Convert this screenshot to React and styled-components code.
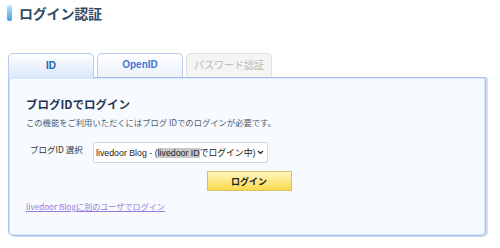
import styled, { createGlobalStyle } from "styled-components";

const GlobalStyle = createGlobalStyle`
    body {
        margin: 0;
        background: #ffffff;
        font-family: "Noto Sans CJK JP", "Noto Sans", sans-serif;
    }
`;

const tabs = [
    { label: "ID", state: "active" },
    { label: "OpenID", state: "normal" },
    { label: "パスワード認証", state: "disabled" },
];

export default function App() {
    return (
        <Page>
            <GlobalStyle />
            <Title>
                <TitleBar />
                ログイン認証
            </Title>
            <TabRow>
                {tabs.map((t) => (
                    <Tab key={t.label} $state={t.state}>{t.label}</Tab>
                ))}
            </TabRow>
            <Panel>
                <Heading>ブログIDでログイン</Heading>
                <Note>この機能をご利用いただくにはブログ IDでのログインが必要です。</Note>
                <FormRow>
                    <Label>ブログID 選択</Label>
                    <Select>
                        livedoor Blog - (<Mark>livedoor ID</Mark>でログイン中)
                        <Chevron viewBox="0 0 8 6" width="7" height="5">
                            <path d="M1 1.2 L4 4.2 L7 1.2" fill="none" stroke="#222" strokeWidth="1.4" />
                        </Chevron>
                    </Select>
                </FormRow>
                <ButtonRow>
                    <LoginButton>ログイン</LoginButton>
                </ButtonRow>
                <OtherLink href="#">livedoor Blogに別のユーザでログイン</OtherLink>
            </Panel>
        </Page>
    );
}

const Page = styled.div`
    width: 500px;
    height: 248px;
    padding: 5px 14px 0 8px;
    box-sizing: border-box;
`;

const Title = styled.h1`
    display: flex;
    align-items: center;
    gap: 7px;
    margin: 0 0 0 -1px;
    height: 16px;
    font-size: 14px;
    font-weight: bold;
    color: #2f4b63;
    letter-spacing: -0.2px;
`;

const TitleBar = styled.span`
    display: block;
    width: 5px;
    height: 16px;
    border-radius: 2px;
    background: linear-gradient(to bottom, #bfe6ff, #3f9fe0);
`;

const TabRow = styled.div`
    display: flex;
    gap: 3px;
    margin-top: 32px;
    position: relative;
    z-index: 1;
`;

const Tab = styled.div`
    width: 86px;
    height: ${(p) => (p.$state === "active" ? "26px" : "24px")};
    margin-bottom: ${(p) => (p.$state === "active" ? "-2px" : "0")};
    box-sizing: border-box;
    display: flex;
    align-items: center;
    justify-content: center;
    padding-bottom: 2px;
    border: 1px solid ${(p) => (p.$state === "disabled" ? "#e0e0e0" : "#b7c9ec")};
    border-bottom: none;
    border-radius: 5px 5px 0 0;
    font-family: "Liberation Sans", "Noto Sans CJK JP", sans-serif;
    font-size: 10px;
    font-weight: ${(p) => (p.$state === "disabled" ? "normal" : "bold")};
    color: ${(p) =>
        p.$state === "active" ? "#2f5aa6" : p.$state === "disabled" ? "#b8b8b8" : "#4576d2"};
    background: ${(p) =>
        p.$state === "active"
            ? "linear-gradient(to bottom, #ffffff, #d7e5fa)"
            : p.$state === "disabled"
            ? "#f4f4f4"
            : "linear-gradient(to bottom, #ffffff, #edf3fd)"};
`;

const Panel = styled.div`
    width: 478px;
    height: 159px;
    box-sizing: border-box;
    padding: 18px 17px 0 17px;
    background: #f7faff;
    border: 1px solid #a9bfea;
    border-radius: 0 0 5px 5px;
    box-shadow: inset 0 0 0 1px #dce6f8, 2px 1px 0 #d3def5;
`;

const Heading = styled.h2`
    margin: 0;
    font-size: 11.5px;
    font-weight: bold;
    color: #1f3550;
    line-height: 16px;
`;

const Note = styled.p`
    margin: 4px 0 0;
    font-size: 8.3px;
    color: #4e5c6c;
    line-height: 12px;
`;

const FormRow = styled.div`
    display: flex;
    align-items: flex-start;
    margin-top: 14px;
    padding-left: 4px;
`;

const Label = styled.span`
    width: 63px;
    padding-top: 1px;
    font-size: 8.5px;
    color: #333;
    line-height: 12px;
`;

const Select = styled.div`
    display: flex;
    align-items: center;
    height: 21px;
    box-sizing: border-box;
    padding: 0 3px 0 2px;
    background: #ffffff;
    border: 1px solid #d6d6d6;
    border-radius: 2px;
    font-family: "Liberation Sans", "Noto Sans CJK JP", sans-serif;
    font-size: 8.8px;
    color: #222;
    white-space: nowrap;
`;

const Mark = styled.span`
    background: #c8c8c8;
`;

const Chevron = styled.svg`
    margin-left: 2px;
`;

const ButtonRow = styled.div`
    display: flex;
    justify-content: center;
    margin-top: 8px;
    padding-left: 4px;
`;

const LoginButton = styled.button`
    width: 85px;
    height: 20px;
    padding: 0;
    border: 1px solid #d8bf6a;
    background: linear-gradient(to bottom, #fff6c2, #fbd94a);
    font-family: "Noto Sans CJK JP", sans-serif;
    font-size: 9px;
    font-weight: bold;
    color: #222;
`;

const OtherLink = styled.a`
    display: inline-block;
    margin-top: 9px;
    font-size: 8.1px;
    color: #9479dc;
    text-decoration: underline;
    line-height: 12px;
`;
